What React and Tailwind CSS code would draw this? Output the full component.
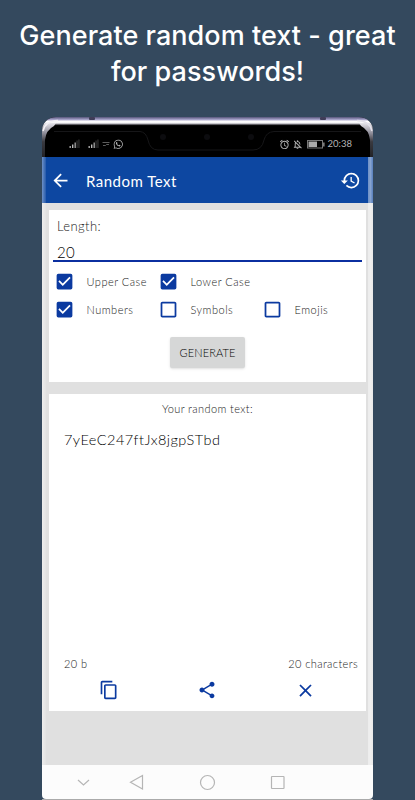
import { useState } from "react";
import {
  MdArrowBack,
  MdHistory,
  MdCheckBox,
  MdCheckBoxOutlineBlank,
  MdContentCopy,
  MdShare,
  MdClose,
  MdAlarm,
  MdOutlineNotificationsOff,
} from "react-icons/md";
import { FaWhatsapp } from "react-icons/fa";

const Signal = () => (
  <svg width="11" height="10" viewBox="0 0 11 10" className="shrink-0">
    <rect x="0.5" y="7" width="1.4" height="2" fill="#aaa" />
    <rect x="3" y="5.5" width="1.4" height="3.5" fill="#bbb" />
    <rect x="5.5" y="3.5" width="1.4" height="5.5" fill="#999" />
    <rect x="7.6" y="1.5" width="0.9" height="7.5" fill="#444" />
    <rect x="9.5" y="0.5" width="0.9" height="8.5" fill="#444" />
  </svg>
);

function StatusBar() {
  return (
    <div className="relative h-10 shrink-0 bg-black rounded-t-[14px] overflow-hidden">
      {/* Metal rim and notch of the phone */}
      <svg className="absolute inset-0" width="331" height="40" viewBox="0 0 331 40">
        <defs>
          <linearGradient id="rim" x1="0" y1="0" x2="0" y2="1">
            <stop offset="0" stopColor="#55547a" />
            <stop offset="0.3" stopColor="#a5a1c8" />
            <stop offset="0.5" stopColor="#fff" />
            <stop offset="0.72" stopColor="#f2f2f5" />
            <stop offset="0.85" stopColor="#77757d" />
            <stop offset="1" stopColor="#111" />
          </linearGradient>
          <linearGradient id="side" x1="0" y1="0" x2="0" y2="1">
            <stop offset="0" stopColor="#e5e4ea" />
            <stop offset="0.3" stopColor="#8e8c98" />
            <stop offset="0.55" stopColor="#3a3a40" />
            <stop offset="1" stopColor="#222226" />
          </linearGradient>
        </defs>
        <rect width="331" height="8.500" fill="url(#rim)" />
        <path d="M0 6H14L12 9Q4 13 3 23V40H0Z" fill="url(#side)" />
        <path d="M331 6H317L319 9Q327 13 328 23V40H331Z" fill="url(#side)" />
        <path d="M1 14Q3 4 16 3.500" fill="none" stroke="#f2f0f5" strokeWidth="1.500" />
        <path d="M330 14Q328 4 315 3.500" fill="none" stroke="#e2e0ea" strokeWidth="1.500" />
        <rect x="47" y="0" width="6" height="3" rx="1" fill="#403d58" />
        <rect x="278" y="0" width="6" height="3" rx="1" fill="#403d58" />
        <path d="M12 14.500H98Q104 15 106 23Q108 33 116 33H211Q220 33 222 23Q224 15 232 14.500H319" fill="none" stroke="#161618" />
        <circle cx="121" cy="20" r="3" fill="#0c0c0f" />
        <circle cx="165" cy="20" r="3" fill="#0c0c0f" />
        <circle cx="209" cy="20" r="3" fill="#0c0c0f" />
      </svg>
      <div className="relative flex h-full items-center pt-3.5 pl-[27px] pr-[21px] text-[#b5b5b5]">
        <Signal />
        <span className="w-2" />
        <Signal />
        <svg className="ml-[3px] mr-1" width="8" height="8" viewBox="0 0 8 8">
          <path d="M0.500 2.500H7.500M1 5.500H3.500L4.500 4.500H7" fill="none" stroke="#666" strokeWidth="0.900" />
        </svg>
        <FaWhatsapp size={10.5} className="-ml-px" />
        <div className="flex-1" />
        <MdAlarm size={11} />
        <MdOutlineNotificationsOff size={11} className="ml-0.5" />
        <svg className="ml-1" width="18" height="9" viewBox="0 0 18 9">
          <rect x="0.500" y="0.500" width="15" height="7.500" fill="none" stroke="#777" />
          <rect x="1.500" y="1.500" width="8.500" height="5.500" fill="#aaa" />
          <rect x="16.200" y="2.500" width="1.300" height="4" fill="#999" />
        </svg>
        <span className="ml-[3px] text-[9.5px] leading-none">20:38</span>
      </div>
    </div>
  );
}

function Option({ label, checked, onChange }) {
  const Icon = checked ? MdCheckBox : MdCheckBoxOutlineBlank;
  return (
    <button onClick={onChange} className="flex w-[104px] h-7 items-center text-left">
      <Icon size={21} className="shrink-0 text-[#0b3aa0]" />
      <span className="ml-3 pt-0.5 text-[11px] tracking-[0.5px] whitespace-nowrap">{label}</span>
    </button>
  );
}

export default function App() {
  const [length, setLength] = useState("20");
  const [options, setOptions] = useState({
    "Upper Case": true,
    "Lower Case": true,
    Numbers: true,
    Symbols: false,
    Emojis: false,
  });

  const toggle = (key) => setOptions({ ...options, [key]: !options[key] });

  const renderOption = (key) => (
    <Option key={key} label={key} checked={options[key]} onChange={() => toggle(key)} />
  );

  return (
    <div className="w-[415px] h-[800px] overflow-hidden bg-[#34495e] flex flex-col font-['Lato',sans-serif]">
      <h1 className="h-[117px] shrink-0 pt-[18px] text-center font-['Inter',sans-serif] font-medium text-[27px] leading-[36px] tracking-[0.05px] text-white whitespace-nowrap">
        Generate random text - great
        <br />
        for passwords!
      </h1>

      <div className="relative ml-[42px] w-[331px] flex-1 flex flex-col">
        <StatusBar />

        {/* App bar */}
        <div className="h-[46px] shrink-0 bg-[#0d47a1] flex items-center pl-2 pr-3 text-white">
          <MdArrowBack size={21} />
          <span className="ml-[15px] pt-0.5 text-[15px] tracking-[0.5px]">Random Text</span>
          <MdHistory size={21} className="ml-auto" />
        </div>

        <div className="h-[562px] shrink-0 bg-[#e0e0e0] px-[7px] pt-[7px] flex flex-col font-light text-[#222]">
          {/* Settings card */}
          <div className="h-[172px] shrink-0 bg-white flex flex-col">
            <label className="h-[34px] pl-2 pt-[7px] text-[13px] leading-[18px] tracking-[0.4px]">Length:</label>
            <input
              value={length}
              onChange={(e) => setLength(e.target.value)}
              className="ml-1 mr-1 h-[18px] pl-1 border-b-2 border-[#0b2fa0] text-[15px] leading-4 tracking-[0.4px] text-black outline-none"
            />
            <div className="pl-[4.5px] pt-[5.5px]">
              <div className="flex">{["Upper Case", "Lower Case"].map(renderOption)}</div>
              <div className="flex">{["Numbers", "Symbols", "Emojis"].map(renderOption)}</div>
            </div>
            <button className="mt-[13.5px] mx-auto w-[75px] h-[31px] shrink-0 rounded-[2px] bg-[#d6d7d7] shadow-sm pt-0.5 text-[11px] tracking-[0.1px] text-black">
              GENERATE
            </button>
          </div>

          {/* Result card */}
          <div className="mt-3 h-[317px] shrink-0 bg-white flex flex-col">
            <div className="pt-[7px] text-center text-[11px] leading-4 tracking-[0.4px]">Your random text:</div>
            <div className="pl-[15px] pt-[13px] text-[14.5px] leading-5 tracking-[0.45px] text-black">7yEeC247ftJx8jgpSTbd</div>
            <div className="mt-auto flex justify-between pl-[15px] pr-2 text-[11px] leading-4 tracking-[0.4px]">
              <span>20 b</span>
              <span>20 characters</span>
            </div>
            <div className="h-[39px] pt-2 pl-[11px] pr-[11px] grid grid-cols-3 justify-items-center text-[#0b3aa0]">
              <MdContentCopy size={20} />
              <MdShare size={20} />
              <MdClose size={21} />
            </div>
          </div>
        </div>

        {/* Android navigation */}
        <div className="h-[34px] shrink-0 bg-[#fcfcfc] rounded-b-[4px] pl-[34px]">
          <svg width="215" height="34" viewBox="0 0 215 34" fill="none" stroke="#b5b5b5" strokeWidth="1.200">
            <path d="M2 15L7.500 20L13 15" />
            <path d="M66.500 10.500V24L54.500 17.300Z" />
            <circle cx="131.500" cy="17.500" r="7" />
            <rect x="195.500" y="11.500" width="12.500" height="12" rx="0.500" />
          </svg>
        </div>
        <div className="h-px bg-[#aaa]" />

        {/* Glass edges over the screen */}
        <div className="absolute left-0 top-10 w-1 h-[608px] bg-gradient-to-r from-white/40 to-white/10 pointer-events-none" />
        <div className="absolute right-0 top-10 w-[5px] h-[608px] bg-gradient-to-r from-white/40 via-white/50 to-white/30 pointer-events-none" />
      </div>
    </div>
  );
}
